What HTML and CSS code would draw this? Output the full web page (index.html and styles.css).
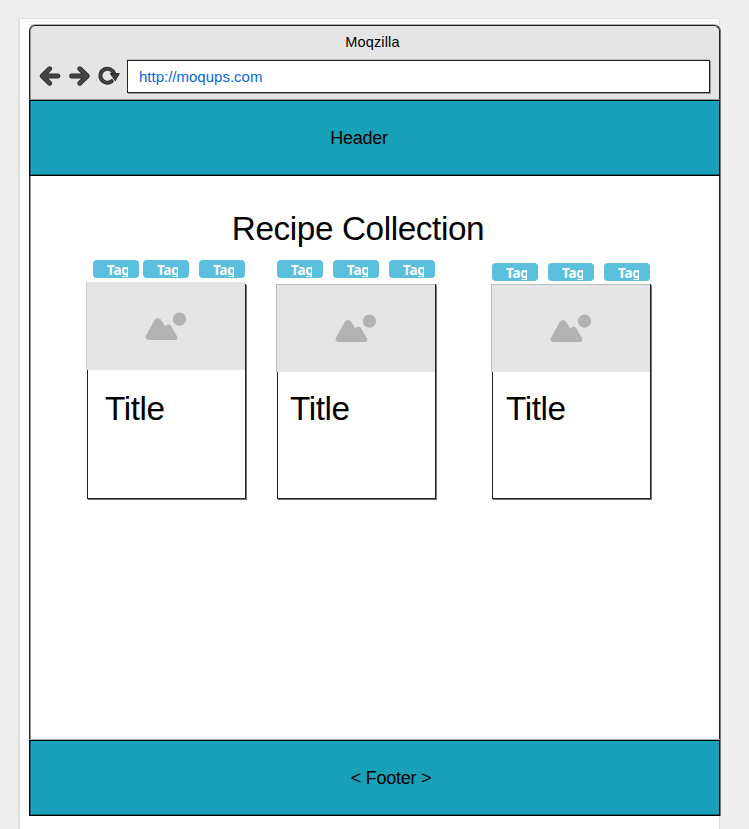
FILE: index.html
```html
<!DOCTYPE html>
<html lang="en">
<head>
<meta charset="utf-8">
<title>Moqzilla</title>
<link rel="stylesheet" href="styles.css">
</head>
<body>
<svg class="defs" width="0" height="0">
  <symbol id="photo" viewBox="0 0 42 30">
    <path d="M4 28C0.500 28 0 25.500 1 23.800L9.700 8C11.300 5.300 14.600 5.300 16.200 8L20.300 14.500C21.700 12 24.700 11.700 26.200 14.200L31.700 23.800C32.800 25.800 32.500 28 30 28Z" fill="#b2b2b2"/>
    <circle cx="34.500" cy="7.200" r="6.600" fill="#b2b2b2"/>
  </symbol>
</svg>
<div class="page">
  <div class="browser">
    <div class="chrome">
      <div class="window-title">Moqzilla</div>
      <div class="toolbar">
        <svg class="nav" width="90" height="30" viewBox="0 0 90 30">
          <g fill="none" stroke-linecap="round" stroke-linejoin="round">
            <path d="M12.700 7.800 5.200 15l7.500 7.200M6 15H20.800M42.800 7.800 50.300 15 42.800 22.200M49.500 15H34.700" stroke="#2b2b2b" stroke-width="5"/>
            <path d="M12.700 7.800 5.200 15l7.500 7.200M6 15H20.800M42.800 7.800 50.300 15 42.800 22.200M49.500 15H34.700" stroke="#444" stroke-width="3.400"/>
            <path d="M77 12.500A7 7 0 1 0 74.700 20.200" stroke="#2b2b2b" stroke-width="4"/>
            <path d="M77 12.500A7 7 0 1 0 74.700 20.200" stroke="#444" stroke-width="2.200"/>
          </g>
          <path d="M73.300 12.500H82.300L78.300 19.800Z" fill="#404040" stroke="#2b2b2b" stroke-linejoin="round"/>
        </svg>
        <div class="address">http://moqups.com</div>
      </div>
    </div>
    <header class="band">Header</header>
    <main>
      <h1>Recipe Collection</h1>
      <div class="recipes">
        <section class="recipe first">
          <div class="tags"><span class="tag"><b>Tag</b></span><span class="tag"><b>Tag</b></span><span class="tag"><b>Tag</b></span></div>
          <div class="card"><div class="photo"><svg width="42" height="30"><use href="#photo"/></svg></div><h2>Title</h2></div>
        </section>
        <section class="recipe second">
          <div class="tags"><span class="tag"><b>Tag</b></span><span class="tag"><b>Tag</b></span><span class="tag"><b>Tag</b></span></div>
          <div class="card"><div class="photo"><svg width="42" height="30"><use href="#photo"/></svg></div><h2>Title</h2></div>
        </section>
        <section class="recipe third">
          <div class="tags"><span class="tag"><b>Tag</b></span><span class="tag"><b>Tag</b></span><span class="tag"><b>Tag</b></span></div>
          <div class="card"><div class="photo"><svg width="42" height="30"><use href="#photo"/></svg></div><h2>Title</h2></div>
        </section>
      </div>
    </main>
    <footer class="band">&lt; Footer &gt;</footer>
  </div>
</div>
</body>
</html>
```
FILE: styles.css
```css
* { box-sizing: border-box; }
body {
  margin: 0;
  height: 829px;
  overflow: hidden;
  padding: 18px 0 0 18px;
  background: #eee;
  color: #000;
  font-family: "Liberation Sans", Arial, sans-serif;
}
.defs { display: block; height: 0; }
svg { display: block; }
.page {
  width: 702px;
  height: 830px;
  padding: 6px 0 0 10px;
  background: #fff;
  border: 1px solid #dedede;
  border-left-width: 2px;
}
.browser {
  width: 691px;
  margin-left: -1px;
  display: flex;
  flex-direction: column;
  border-radius: 6px 6px 0 0;
  box-shadow: 1px 0 0 #777, 0 -1px 0 #aaa;
}
.chrome {
  height: 75px;
  padding-top: 8px;
  background: #e5e5e5;
  border: 1px solid #222;
  border-bottom: 1px solid #999;
  border-radius: 6px 6px 0 0;
  box-shadow: inset 1px 0 0 #999;
}
.window-title {
  height: 17px;
  padding-right: 4px;
  line-height: 17px;
  font-size: 14.500px;
  letter-spacing: .15px;
  text-align: center;
}
.toolbar { display: flex; margin: 9px 0 0 7px; }
.nav { margin-top: 1px; }
.address {
  width: 583px;
  height: 33px;
  padding-left: 11px;
  border: 1px solid #222;
  box-shadow: 1px 1px 0 #999, 0 -1px 0 #bbb;
  background: #fff;
  color: #0668e1;
  font-size: 15px;
  line-height: 32px;
}
.band {
  height: 76px;
  border: 1px solid #000;
  box-shadow: inset 1px -1px 0 #0d6575;
  background: #18a1b8;
  font-size: 18px;
  letter-spacing: -.25px;
  line-height: 74px;
  text-align: center;
}
header.band { padding-right: 31px; }
footer.band { padding-left: 33px; box-shadow: 0 -1px 0 #aaa, inset 1px -1px 0 #0d6575; }
main {
  height: 564px;
  padding-top: 33px;
  border: solid #222;
  border-width: 0 1px;
  background: #fff;
  box-shadow: inset 1px 0 0 #999;
}
h1, h2 {
  margin: 0;
  font-size: 33.300px;
  font-weight: 400;
  line-height: 39px;
  letter-spacing: -.39px;
}
h1 { padding-right: 33px; text-align: center; }
.recipes { display: flex; padding-left: 56px; }
.recipe { width: 161px; }
.first { padding-top: 12px; }
.second { margin-left: 29px; padding-top: 12px; }
.third { margin-left: 54px; padding-top: 15px; }
.tags { display: flex; gap: 10px; padding-left: 1px; }
.first .tags { padding-left: 7px; }
.first .tag:first-child { margin-right: -6px; }
.tag {
  width: 46px;
  height: 18px;
  padding: 2px 0 0 14px;
  border-radius: 4px;
  background: #5bc0de;
  color: #fff;
}
.tag b {
  display: block;
  width: 21px;
  height: 15px;
  overflow: hidden;
  font: 700 13.300px/16px "Noto Sans", sans-serif;
  letter-spacing: -.2px;
}
.card {
  width: 159px;
  height: 215px;
  margin: 6px 0 0 1px;
  border: 1px solid #222;
  box-shadow: 1px 1px 0 #777;
}
.third .card { margin-top: 3px; }
.photo {
  width: 159px;
  height: 88px;
  margin: -1px 0 0 -2px;
  padding: 30px 0 0 59px;
  background: #e5e5e5;
  box-shadow: inset 1px 1px 0 #bbb;
}
.first .photo { margin-top: -3px; box-shadow: inset 1px 0 0 #ccc; }
.card h2 { padding: 17px 0 0 12px; }
.first .card h2 { padding: 19px 0 0 17px; }
.third .card h2 { padding-left: 13px; }
```
